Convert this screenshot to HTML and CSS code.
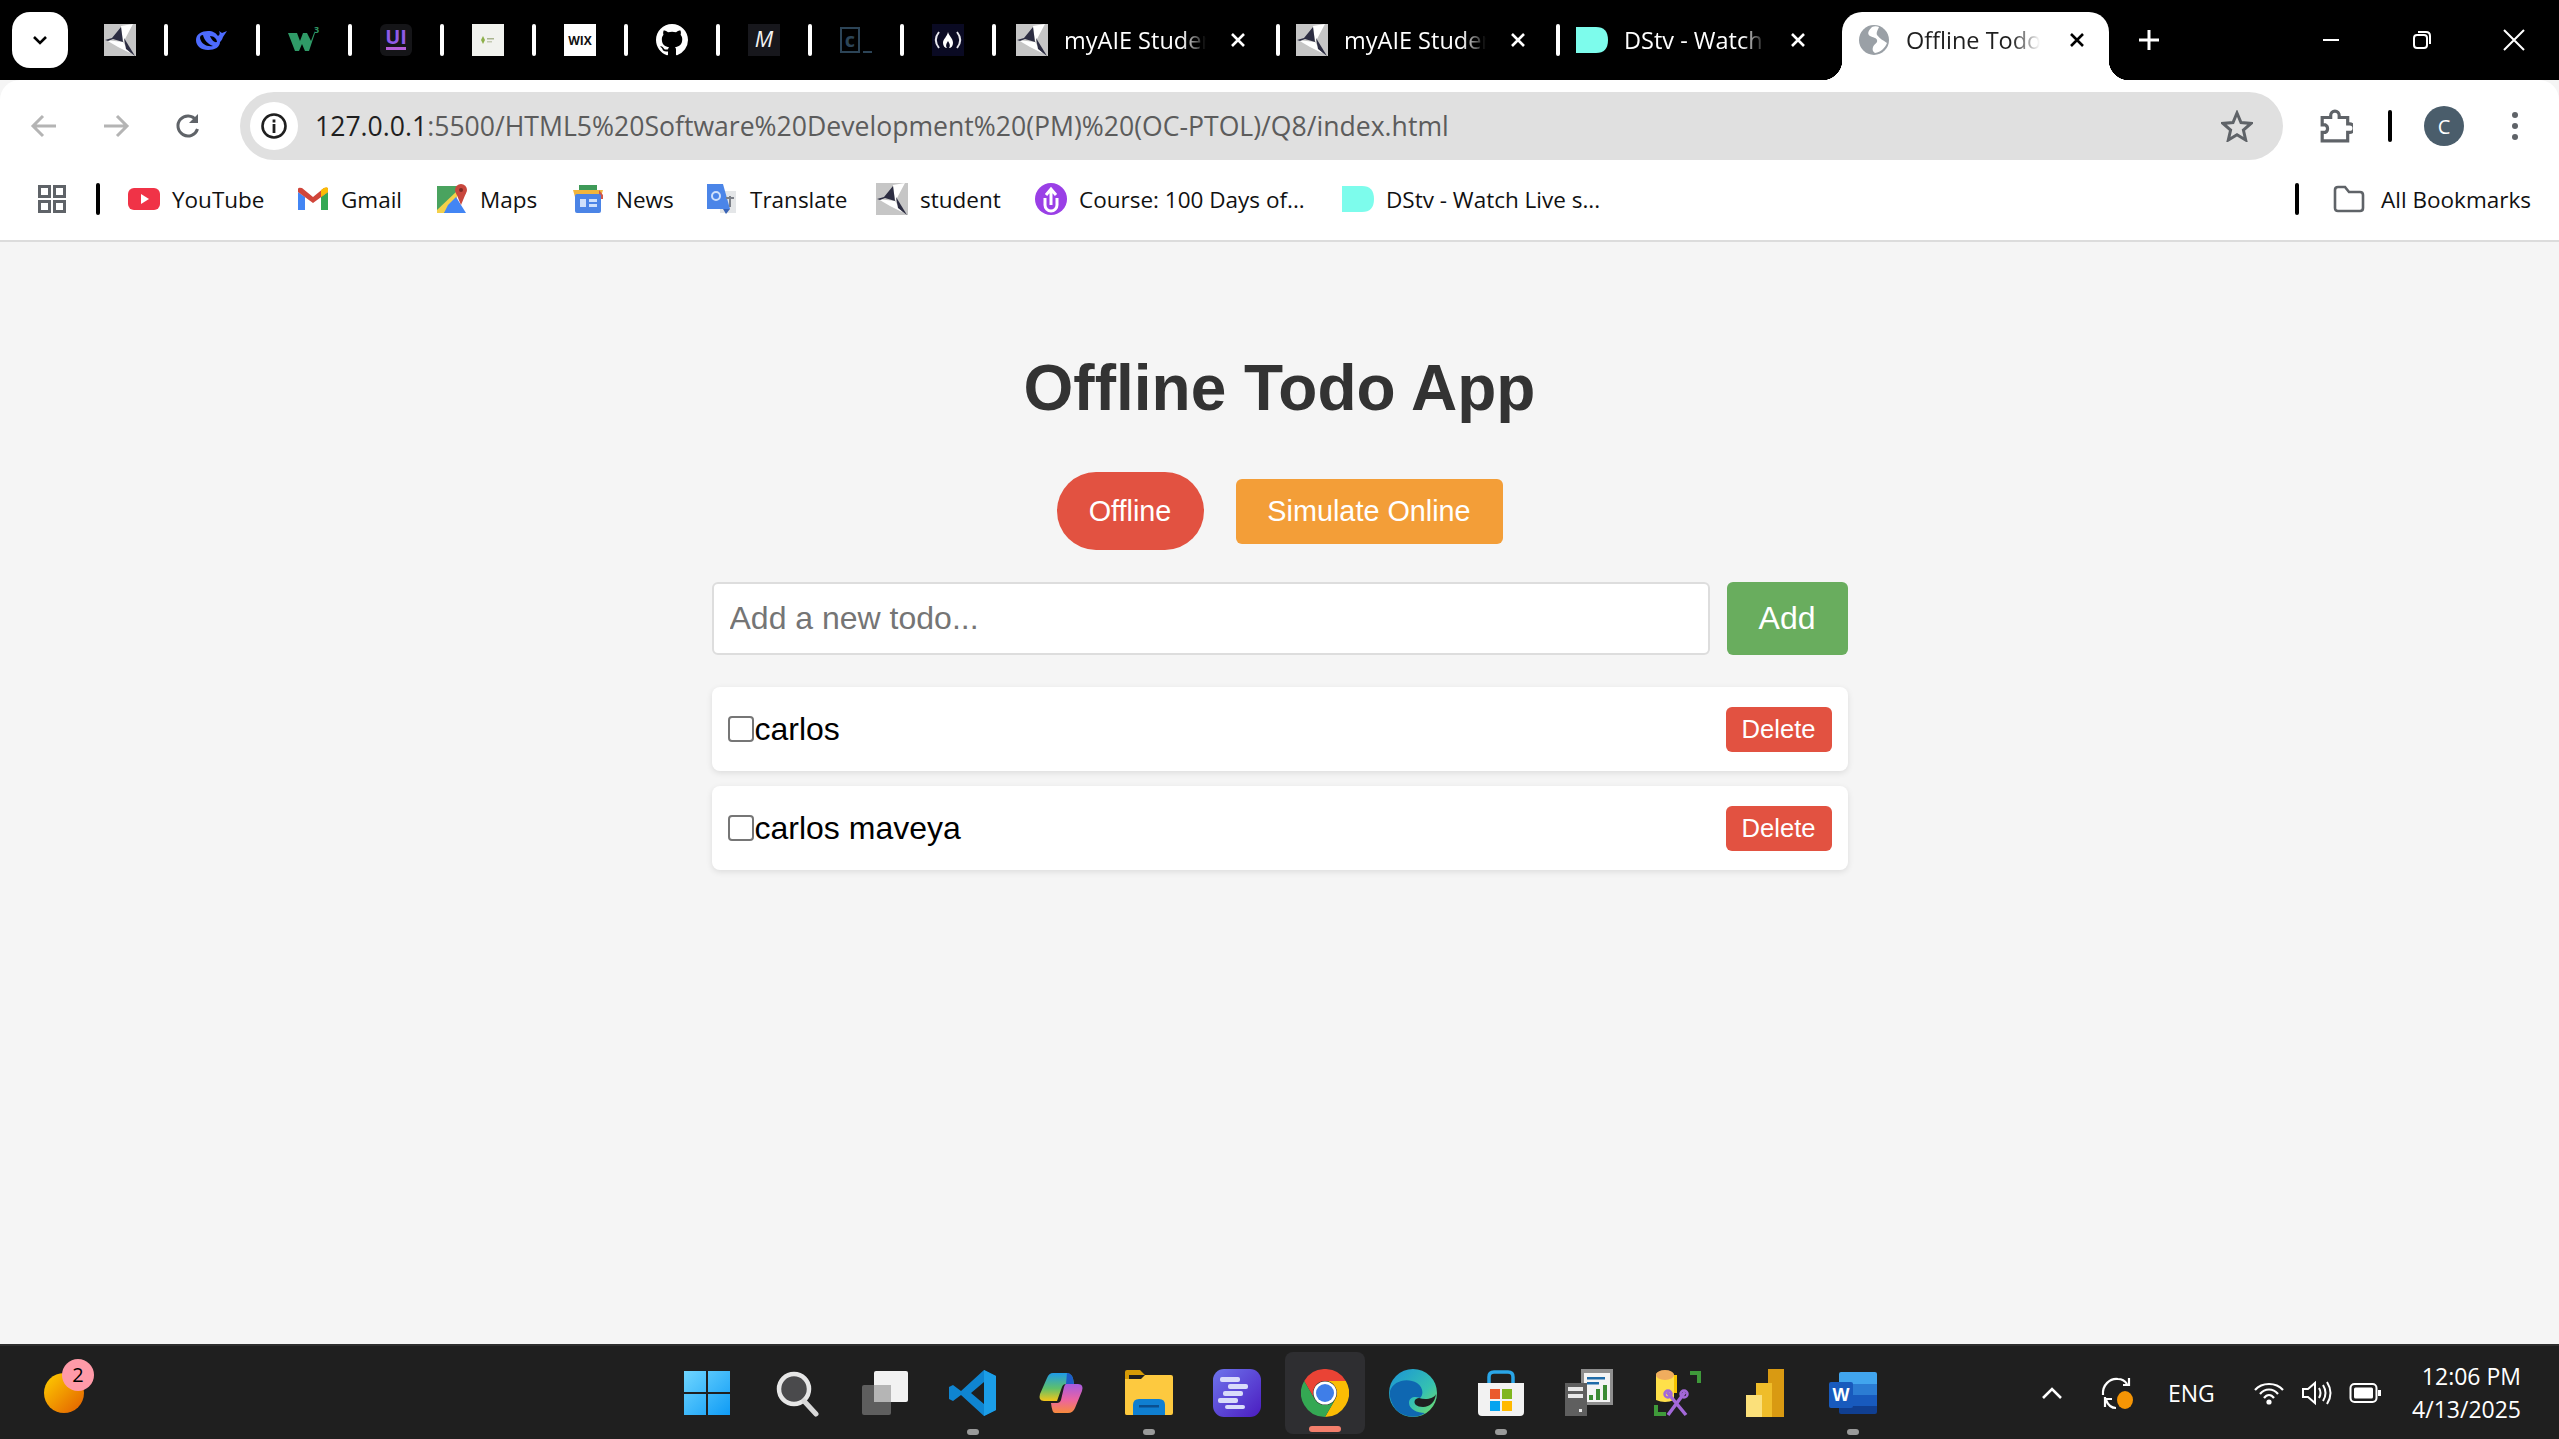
FILE: index.html
```html
<!DOCTYPE html>
<html>
<head>
  <title>Offline Todo App</title>
  <link rel="stylesheet" href="styles.css">
</head>
<body>
  <!-- shared icons -->
  <svg class="defs" width="0" height="0">
    <symbol id="aie" viewBox="0 0 32 32">
      <rect width="32" height="32" fill="#c6c6c6"/>
      <path d="M17 2 29 0 21 15 19 18Z" fill="#fff"/>
      <path d="M2 16 19 18 26 29 14 23Z" fill="#fff"/>
      <path d="M17 3 8 14 1 16 4 17 9 15 19 18Z" fill="#2c2d42"/>
      <path d="M20 14 31 32 22 25Z" fill="#2c2d42"/>
    </symbol>
    <symbol id="dstv" viewBox="0 0 32 32">
      <path d="M0 3H20Q32 3 32 16 32 29 20 29H0Z" fill="#7dfcec"/>
    </symbol>
    <symbol id="close" viewBox="0 0 16 16">
      <path d="M2 2 14 14M14 2 2 14" stroke="#000" stroke-width="2.6" fill="none"/>
    </symbol>
  </svg>

  <div class="tabstrip">
    <button class="tab-search">
      <svg width="16" height="10" viewBox="0 0 16 10"><path d="M2 2 8 8 14 2" stroke="#000" stroke-width="2.6" fill="none"/></svg>
    </button>

    <div class="pinned first">
      <svg class="fav"><use href="#aie"/></svg>
      <i class="tab-sep"></i>
      <svg class="fav" viewBox="0 0 32 32">
        <path d="M0 16C0 10 6 7 12 7 17 7 20 9 22 12 24 11 24 9 23 7L26 9 31 7 27 13C26 16 25 17 24 18 24 23 19 26 12 26 5 26 0 22 0 16Z" fill="#4d6bfe"/>
        <path d="M4 14C5 20 11 23 17 22 12 20 8 16 7 11 5 11 4 12 4 14ZM14 12C15 15 18 19 21 18 21 15 18 12 14 12Z" fill="#000"/>
      </svg>
      <i class="tab-sep"></i>
      <svg class="fav" viewBox="0 0 32 32">
        <path d="M0 9H9L12 17 15 9H19L23 17 26 9H27L21 27H17L14 20 11 27H7Z" fill="#2f9a67"/>
        <text x="26" y="9" class="fav-three">3</text>
      </svg>
      <i class="tab-sep"></i>
      <svg class="fav" viewBox="0 0 32 32">
        <rect width="32" height="32" rx="6" fill="#151518"/>
        <text x="16" y="20" class="fav-ui">UI</text>
        <rect x="6" y="23" width="20" height="3" fill="#b45ed8"/>
      </svg>
      <i class="tab-sep"></i>
      <svg class="fav" viewBox="0 0 32 32">
        <rect width="32" height="32" fill="#f1f2ee"/>
        <path d="M11 12 13 16 11 20 9 16Z" fill="#8db04a"/>
        <rect x="15" y="14" width="7" height="1.5" fill="#a9b48e"/>
        <rect x="15" y="17" width="5" height="1.5" fill="#c3c9b2"/>
      </svg>
      <i class="tab-sep"></i>
      <svg class="fav" viewBox="0 0 32 32">
        <rect width="32" height="32" fill="#fff"/>
        <text x="16" y="21" class="fav-wix">WIX</text>
      </svg>
      <i class="tab-sep"></i>
      <svg class="fav" viewBox="0 0 16 16">
        <path fill="#fff" d="M8 0C3.58 0 0 3.58 0 8c0 3.54 2.29 6.53 5.47 7.59.4.07.55-.17.55-.38 0-.19-.01-.82-.01-1.49-2.01.37-2.53-.49-2.69-.94-.09-.23-.48-.94-.82-1.13-.28-.15-.68-.52-.01-.53.63-.01 1.08.58 1.23.82.72 1.21 1.87.87 2.33.66.07-.52.28-.87.51-1.07-1.78-.2-3.64-.89-3.64-3.95 0-.87.31-1.59.82-2.15-.08-.2-.36-1.02.08-2.12 0 0 .67-.21 2.2.82.64-.18 1.32-.27 2-.27.68 0 1.36.09 2 .27 1.53-1.04 2.2-.82 2.2-.82.44 1.1.16 1.92.08 2.12.51.56.82 1.27.82 2.15 0 3.07-1.87 3.75-3.65 3.95.29.25.54.73.54 1.48 0 1.07-.01 1.93-.01 2.2 0 .21.15.46.55.38A8.013 8.013 0 0016 8c0-4.42-3.58-8-8-8z"/>
      </svg>
      <i class="tab-sep"></i>
      <svg class="fav" viewBox="0 0 32 32">
        <rect width="32" height="32" fill="#17171c"/>
        <text x="16" y="23" class="fav-m">M</text>
      </svg>
      <i class="tab-sep"></i>
      <svg class="fav" viewBox="0 0 32 32">
        <rect x="1" y="4" width="18" height="24" fill="none" stroke="#2c4457" stroke-width="2"/>
        <text x="10" y="23" class="fav-c">c</text>
        <rect x="23" y="27" width="9" height="2" fill="#2c4457"/>
      </svg>
      <i class="tab-sep"></i>
      <svg class="fav" viewBox="0 0 32 32">
        <rect width="32" height="32" fill="#0a0a23"/>
        <path d="M7 8C3 13 3 19 7 24M25 8C29 13 29 19 25 24" stroke="#e8e8ee" stroke-width="2" fill="none"/>
        <path d="M16 8C17 12 21 14 21 19 21 22 19 24 17 24 19 21 17 19 16 17 15 19 13 21 15 24 13 24 11 22 11 19 11 15 15 13 16 8Z" fill="#fff"/>
      </svg>
      <i class="tab-sep"></i>
    </div>

    <div class="tab">
      <svg class="fav"><use href="#aie"/></svg>
      <span class="tab-title">myAIE Studen</span>
      <svg class="tab-close"><use href="#close"/></svg>
      <i class="tab-sep"></i>
    </div>
    <div class="tab">
      <svg class="fav"><use href="#aie"/></svg>
      <span class="tab-title">myAIE Studen</span>
      <svg class="tab-close"><use href="#close"/></svg>
      <i class="tab-sep"></i>
    </div>
    <div class="tab">
      <svg class="fav"><use href="#dstv"/></svg>
      <span class="tab-title">DStv - Watch</span>
      <svg class="tab-close"><use href="#close"/></svg>
    </div>
    <div class="tab active">
      <svg class="fav" viewBox="0 0 32 32">
        <circle cx="16" cy="16" r="15" fill="#9aa0a6"/>
        <path d="M14 3C10 7 9 10 12 12 15 14 18 13 19 16 20 19 16 20 15 23 14 26 15 28 17 29 23 28 27 24 29 19 25 16 22 15 19 11 18 8 20 6 21 3 19 2 16 2 14 3Z" fill="#fff"/>
      </svg>
      <span class="tab-title">Offline Todo A</span>
      <svg class="tab-close"><use href="#close"/></svg>
    </div>

    <svg class="new-tab" viewBox="0 0 22 22"><path d="M11 1V21M1 11H21" stroke="#fff" stroke-width="3"/></svg>

    <div class="win-controls">
      <svg width="20" height="20" viewBox="0 0 20 20"><path d="M2 10H18" stroke="#fff" stroke-width="2"/></svg>
      <svg width="20" height="20" viewBox="0 0 20 20"><rect x="2" y="5" width="13" height="13" rx="3" stroke="#fff" stroke-width="2" fill="none"/><path d="M6 2H14Q18 2 18 6V14" stroke="#fff" stroke-width="2" fill="none"/></svg>
      <svg width="22" height="22" viewBox="0 0 22 22"><path d="M1 1 21 21M21 1 1 21" stroke="#fff" stroke-width="2"/></svg>
    </div>
  </div>

  <div class="toolbar">
    <svg class="nav-icon back" viewBox="0 0 28 28"><path d="M26 14H3M13 4 3 14 13 24" stroke="#b4b4b4" stroke-width="3" fill="none"/></svg>
    <svg class="nav-icon forward" viewBox="0 0 28 28"><path d="M2 14H25M15 4 25 14 15 24" stroke="#b4b4b4" stroke-width="3" fill="none"/></svg>
    <svg class="nav-icon reload" viewBox="0 0 28 28"><path d="M23.5 17A10 10 0 1 1 22 8" stroke="#5f6368" stroke-width="3" fill="none"/><path d="M24 2V11H15Z" fill="#5f6368"/></svg>

    <div class="omnibox">
      <span class="site-info">
        <svg width="28" height="28" viewBox="0 0 28 28"><circle cx="14" cy="14" r="11.5" stroke="#1f1f1f" stroke-width="2.6" fill="none"/><rect x="12.6" y="12" width="2.8" height="9" fill="#1f1f1f"/><rect x="12.6" y="7.5" width="2.8" height="3" fill="#1f1f1f"/></svg>
      </span>
      <span class="url"><b>127.0.0.1</b>:5500/HTML5%20Software%20Development%20(PM)%20(OC-PTOL)/Q8/index.html</span>
      <svg class="star" viewBox="0 0 32 32"><path d="M16 3 20 12.5 30 13.4 22.4 20 24.7 30 16 24.7 7.3 30 9.6 20 2 13.4 12 12.5Z" stroke="#5f6368" stroke-width="3" fill="none"/></svg>
    </div>

    <svg class="ext-icon" viewBox="0 0 32 32"><path d="M3 8H11V6A4 4 0 0 1 19 6V8H27V14H29A4 4 0 0 1 29 22H27V30H3V22H6A4 4 0 0 0 6 15H3Z" stroke="#5f6368" stroke-width="3" fill="none"/></svg>
    <i class="bar-sep tool-sep"></i>
    <span class="avatar">C</span>
    <span class="more-dots"><i></i><i></i><i></i></span>
  </div>

  <div class="bookmarks">
    <svg class="apps" viewBox="0 0 28 28"><path d="M1.5 1.5H11.5V11.5H1.5ZM16.5 1.5H26.5V11.5H16.5ZM1.5 16.5H11.5V26.5H1.5ZM16.5 16.5H26.5V26.5H16.5Z" stroke="#5f6368" stroke-width="3" fill="none"/></svg>
    <i class="bar-sep book-sep"></i>

    <a class="bookmark">
      <svg class="bm-icon" viewBox="0 0 32 32"><rect y="5" width="32" height="22" rx="6" fill="#f03347"/><path d="M13 11 21 16 13 21Z" fill="#fff"/></svg>
      YouTube
    </a>
    <a class="bookmark">
      <svg class="bm-icon" viewBox="0 0 32 32"><path d="M1 9V27H8V14Z" fill="#4285f4"/><path d="M24 14V27H31V9Z" fill="#34a853"/><path d="M1 9V6Q1 4 5 5L16 14 27 5Q31 4 31 6V9L16 20Z" fill="#d0453a"/><path d="M24 14 31 9V6Q31 3 27 5L24 7Z" fill="#fbbc04"/></svg>
      Gmail
    </a>
    <a class="bookmark">
      <svg class="bm-icon tall" viewBox="0 0 32 32"><path d="M1 3H21V30H1Z" fill="#4aa35f"/><path d="M1 27 21 8 21 16 8 30H1Z" fill="#f4d04a"/><path d="M12 22 20 14 30 30H8Z" fill="#4285f4"/><circle cx="25" cy="7" r="6" fill="#c8473d"/><path d="M20 10 25 22 30 10Z" fill="#c8473d"/><circle cx="25" cy="7" r="2" fill="#7d2a25"/></svg>
      Maps
    </a>
    <a class="bookmark">
      <svg class="bm-icon" viewBox="0 0 32 32"><rect x="7" y="2" width="18" height="8" fill="#3e9a58"/><path d="M1 7H31L29 14H3Z" fill="#f2b53c"/><path d="M27 7 31 12V16H27Z" fill="#d0574a"/><rect x="3" y="11" width="26" height="19" rx="2" fill="#4b84e6"/><rect x="8" y="16" width="6" height="8" fill="#cfe0fb"/><rect x="17" y="16" width="8" height="3" fill="#cfe0fb"/><rect x="17" y="21" width="8" height="3" fill="#cfe0fb"/></svg>
      News
    </a>
    <a class="bookmark">
      <svg class="bm-icon" viewBox="0 0 32 32"><path d="M14 8H30V30H14Z" fill="#e4e6e8"/><path d="M1 1H17L24 26H1Z" fill="#4b85e8"/><path d="M17 26H24L20 31Z" fill="#3a64b5"/><circle cx="10" cy="13" r="4" fill="none" stroke="#cfe0fb" stroke-width="2"/><path d="M20 15H28M24 13V24" stroke="#7c8088" stroke-width="2"/></svg>
      Translate
    </a>
    <a class="bookmark">
      <svg class="bm-icon tall"><use href="#aie"/></svg>
      student
    </a>
    <a class="bookmark">
      <svg class="bm-icon tall" viewBox="0 0 32 32"><circle cx="16" cy="16" r="16" fill="#9a3fe6"/><path d="M10 15V22A6 6 0 0 0 22 22V15" fill="none" stroke="#fff" stroke-width="3"/><path d="M16 22V8M11 12 16 6 21 12" fill="none" stroke="#fff" stroke-width="3"/></svg>
      Course: 100 Days of...
    </a>
    <a class="bookmark">
      <svg class="bm-icon"><use href="#dstv"/></svg>
      DStv - Watch Live s...
    </a>

    <i class="bar-sep all-sep"></i>
    <a class="all-marks">
      <svg class="bm-icon" viewBox="0 0 32 32"><path d="M2 7Q2 4 5 4H12L16 9H27Q30 9 30 12V25Q30 28 27 28H5Q2 28 2 25Z" stroke="#5f6368" stroke-width="2.6" fill="none"/></svg>
      All Bookmarks
    </a>
  </div>

  <main class="app">
    <h1>Offline Todo App</h1>

    <div class="status-row">
      <span class="status-pill">Offline</span>
      <button class="simulate-btn">Simulate Online</button>
    </div>

    <div class="todo-form">
      <input class="todo-input" type="text" placeholder="Add a new todo...">
      <button class="add-btn">Add</button>
    </div>

    <ul class="todo-list">
      <li class="todo-item">
        <input type="checkbox">
        <span class="todo-text">carlos</span>
        <button class="delete-btn">Delete</button>
      </li>
      <li class="todo-item">
        <input type="checkbox">
        <span class="todo-text">carlos maveya</span>
        <button class="delete-btn">Delete</button>
      </li>
    </ul>
  </main>

  <footer class="taskbar">
    <div class="widget"><span class="widget-badge">2</span></div>

    <div class="task-icons">
      <span class="slot win-start">
        <svg viewBox="0 0 48 48"><defs><linearGradient id="winblue" x1="0" y1="0" x2="1" y2="1"><stop offset="0" stop-color="#6fd6ff"/><stop offset="1" stop-color="#0f9bf5"/></linearGradient></defs><path d="M1 2H23V23H1ZM25 2H47V23H25ZM1 25H23V46H1ZM25 25H47V46H25Z" fill="url(#winblue)"/></svg>
      </span>
      <span class="slot">
        <svg viewBox="0 0 48 48"><circle cx="21" cy="20" r="15" fill="#4a4a4c" stroke="#e6e6e6" stroke-width="4.5"/><path d="M31 32 43 45" stroke="#d8d8d8" stroke-width="5" stroke-linecap="round"/></svg>
      </span>
      <span class="slot">
        <svg viewBox="0 0 48 48"><rect x="1" y="16" width="29" height="30" rx="2" fill="#5e5e5e"/><rect x="13" y="2" width="34" height="31" rx="2" fill="#f2f2f2"/><rect x="13" y="16" width="17" height="17" fill="#b5b5b5"/></svg>
      </span>
      <span class="slot dot">
        <svg viewBox="0 0 48 48"><path d="M35 1 47 7V41L35 47 12 26 4 32 0 30V18L4 16 12 22ZM35 13 22 24 35 35Z" fill="#0f85d1"/><path d="M35 1 47 7V41L35 47Z" fill="#1b9ee8"/></svg>
      </span>
      <span class="slot">
        <svg viewBox="0 0 48 48"><defs><linearGradient id="copa" x1="0" y1="0" x2="0" y2="1"><stop offset="0" stop-color="#1e9be8"/><stop offset=".55" stop-color="#5fc06a"/><stop offset="1" stop-color="#f5c518"/></linearGradient><linearGradient id="copb" x1="0" y1="0" x2="0" y2="1"><stop offset="0" stop-color="#a55be0"/><stop offset=".55" stop-color="#ec64a0"/><stop offset="1" stop-color="#f78a3c"/></linearGradient></defs><path d="M16 4H30Q36 4 37 15H29Q26 15 25 18L20 32H7Q1 32 3 25L10 9Q12 4 16 4Z" fill="url(#copa)"/><path d="M30 4Q36 4 37 15H29Z" fill="#1c5cc8"/><path d="M29 15H41Q47 15 45 22L38 39Q36 44 31 44H18Q15 44 14 34H20Q23 34 24 31L27 18Q28 15 29 15Z" fill="url(#copb)"/></svg>
      </span>
      <span class="slot dot">
        <svg viewBox="0 0 48 48"><path d="M0 3Q0 1 2 1H15L20 6H4V46H2Q0 46 0 44Z" fill="#d59a06"/><path d="M0 10 16 10 20 6H46Q48 6 48 8V44Q48 46 46 46H2Q0 46 0 44Z" fill="#fdc93f"/><path d="M8 46V36Q8 30 14 30H34Q40 30 40 36V46Z" fill="#0f7fd1"/><rect x="14" y="36" width="20" height="2.5" fill="#0a4f8f"/></svg>
      </span>
      <span class="slot">
        <svg viewBox="0 0 48 48"><defs><linearGradient id="purp" x1="0" y1="0" x2="1" y2="1"><stop offset="0" stop-color="#6d74ec"/><stop offset="1" stop-color="#4b1cc0"/></linearGradient></defs><rect width="48" height="48" rx="11" y="0" fill="url(#purp)"/><g fill="#d8dcfa"><rect x="7" y="8" width="20" height="5" rx="2"/><rect x="15" y="15" width="20" height="5" rx="2"/><rect x="10" y="22" width="20" height="5" rx="2"/><rect x="5" y="29" width="20" height="5" rx="2"/><rect x="12" y="36" width="20" height="4" rx="2"/></g></svg>
      </span>
      <span class="slot current">
        <svg viewBox="0 0 48 48"><path d="M3.2 12A24 24 0 0 1 44.8 12H24A12 12 0 0 0 13.6 30Z" fill="#ea4335"/><path d="M44.8 12A24 24 0 0 1 24 48L34.4 30A12 12 0 0 0 24 12Z" fill="#fbbc04"/><path d="M3.2 12 13.6 30A12 12 0 0 0 34.4 30L24 48A24 24 0 0 1 3.2 12Z" fill="#34a853"/><circle cx="24" cy="24" r="11.5" fill="#fff"/><circle cx="24" cy="24" r="9" fill="#3f7ee8"/></svg>
      </span>
      <span class="slot">
        <svg viewBox="0 0 48 48"><defs><linearGradient id="edgea" x1="0" y1="0" x2="1" y2="1"><stop offset="0" stop-color="#1a93d8"/><stop offset=".6" stop-color="#35c1b1"/><stop offset="1" stop-color="#7be05f"/></linearGradient></defs><circle cx="24" cy="24" r="24" fill="url(#edgea)"/><path d="M1 22C4 12 18 8 28 14 34 18 35 25 31 29 26 27 20 28 20 34 20 40 28 44 36 44 28 50 12 49 5 38 2 33 0 27 1 22Z" fill="#0f67b1"/><path d="M30 29C36 31 45 30 47 25 46 33 41 38 34 38 28 38 24 35 26 31 27 30 28 29 30 29Z" fill="#1f1f1f"/></svg>
      </span>
      <span class="slot dot">
        <svg viewBox="0 0 48 48"><path d="M12 14V8Q12 3 17 3H31Q36 3 36 8V14" stroke="#2aa6e8" stroke-width="3.5" fill="none"/><path d="M1 14H47V43Q47 47 43 47H5Q1 47 1 43Z" fill="#f2f2f2"/><rect x="13" y="20" width="10" height="10" fill="#ea5a2d"/><rect x="25" y="20" width="10" height="10" fill="#7fb61e"/><rect x="13" y="32" width="10" height="10" fill="#06a4ef"/><rect x="25" y="32" width="10" height="10" fill="#ffb900"/></svg>
      </span>
      <span class="slot">
        <svg viewBox="0 0 48 48"><rect x="16" y="0" width="32" height="36" fill="#8e8e8e"/><rect x="19" y="4" width="26" height="29" fill="#f4f4f4"/><rect x="22" y="8" width="18" height="2.5" fill="#1f6ba8"/><rect x="22" y="13" width="12" height="2.5" fill="#1f6ba8"/><path d="M24 31V26H28V31ZM31 31V20H35V31ZM38 31V16H42V31Z" fill="#3b8a34"/><rect x="0" y="14" width="22" height="33" fill="#5f5f5f"/><rect x="3" y="18" width="15" height="4" fill="#e8e8e8"/><rect x="3" y="25" width="15" height="4" fill="#e8e8e8"/><rect x="14" y="40" width="3" height="3" fill="#e8e8e8"/></svg>
      </span>
      <span class="slot">
        <svg viewBox="0 0 48 48"><path d="M3 6Q3 2 12 2 20 2 21 6V31Q12 35 3 31Z" fill="#ffe04a"/><ellipse cx="12" cy="6" rx="9" ry="5" fill="#f0ad5e"/><path d="M21 6H24V24H21Z" fill="#f7c400"/><path d="M37 2H48V14H44V6H37ZM1 36H5V43H13V47H1Z" fill="#3f9a3a"/><path d="M14 23 33 46M32 23 15 46" stroke="#a368d8" stroke-width="3.5"/><circle cx="15" cy="25" r="3.5" fill="none" stroke="#a368d8" stroke-width="2.5"/><circle cx="31" cy="25" r="3.5" fill="none" stroke="#a368d8" stroke-width="2.5"/></svg>
      </span>
      <span class="slot">
        <svg viewBox="0 0 48 48"><rect x="27" y="0" width="16" height="48" fill="#d99a12"/><rect x="15" y="14" width="16" height="34" fill="#efbd2a"/><rect x="5" y="26" width="16" height="22" fill="#fbe07a"/></svg>
      </span>
      <span class="slot dot">
        <svg viewBox="0 0 48 48"><path d="M10 5Q10 3 12 3H46Q48 3 48 5V15H10Z" fill="#41a5ee"/><rect x="10" y="15" width="38" height="11" fill="#2b7cd3"/><rect x="10" y="26" width="38" height="11" fill="#185abd"/><path d="M10 37H48V43Q48 45 46 45H12Q10 45 10 43Z" fill="#103f91"/><rect x="0" y="13" width="24" height="26" rx="2" fill="#185abd"/><text x="12" y="32" class="word-w">W</text></svg>
      </span>
    </div>

    <div class="tray">
      <svg class="tray-chevron" viewBox="0 0 22 14"><path d="M2 12 11 3 20 12" stroke="#fff" stroke-width="2.6" fill="none"/></svg>
      <svg class="tray-sync" viewBox="0 0 32 34"><path d="M2 19C1 9 9 2 17 3 21 3 24 5 26 8M22 9H28V2" stroke="#fff" stroke-width="2.2" fill="none"/><path d="M4 21V31M4 23H11M5 24C7 29 11 32 15 32" stroke="#fff" stroke-width="2.2" fill="none"/><ellipse cx="24" cy="24" rx="8" ry="9" fill="#f59505"/></svg>
      <span class="tray-lang">ENG</span>
      <svg class="tray-icon" viewBox="0 0 32 26"><path d="M2 10C9 2 23 2 30 10M7 14C12 8 20 8 25 14M11 18C14 14 18 14 21 18" stroke="#fff" stroke-width="2.2" fill="none"/><circle cx="16" cy="22" r="2.6" fill="#fff"/></svg>
      <svg class="tray-icon" viewBox="0 0 32 26"><path d="M2 9H7L14 3V23L7 17H2Z" stroke="#fff" stroke-width="2" fill="none"/><path d="M18 8Q21 13 18 18M22 5Q27 13 22 21M26 2Q33 13 26 24" stroke="#fff" stroke-width="2" fill="none"/></svg>
      <svg class="tray-icon" viewBox="0 0 32 26"><rect x="1.5" y="4" width="26" height="18" rx="4" stroke="#fff" stroke-width="2" fill="none"/><rect x="5" y="7.5" width="19" height="11" rx="1.5" fill="#fff"/><rect x="29" y="10" width="3" height="6" fill="#fff"/></svg>
      <div class="clock">
        <span>12:06 PM</span>
        <span>4/13/2025</span>
      </div>
    </div>
  </footer>
</body>
</html>
```

FILE: styles.css
```css
* {
  box-sizing: border-box;
}

html, body {
  height: 100%;
}

body {
  display: flex;
  flex-direction: column;
  margin: 0;
  overflow: hidden;
  font-family: "Liberation Sans", Arial, sans-serif;
  background-color: #f5f5f5;
}

.defs {
  position: absolute;
}

/* tab strip */
.tabstrip {
  display: flex;
  align-items: center;
  flex: none;
  height: 80px;
  padding-left: 12px;
  background-color: #000;
  color: #fff;
  font-family: "Open Sans", sans-serif;
  font-size: 23.5px;
}

.tab-search {
  display: flex;
  align-items: center;
  justify-content: center;
  width: 56px;
  height: 56px;
  padding: 0;
  border: none;
  border-radius: 18px;
  background-color: #fff;
}

.pinned {
  display: flex;
  align-items: center;
  gap: 28px;
  margin-left: 36px;
  margin-right: 20px;
}

.fav {
  flex: none;
  width: 32px;
  height: 32px;
}

.fav-three {
  font-size: 9px;
  fill: #2f9a67;
  font-weight: bold;
}

.fav-ui {
  font-size: 20px;
  font-weight: bold;
  text-anchor: middle;
  fill: #8f5be8;
}

.fav-wix {
  font-size: 12px;
  font-weight: bold;
  text-anchor: middle;
  fill: #111;
}

.fav-m {
  font-size: 22px;
  font-style: italic;
  text-anchor: middle;
  fill: #f2f2f2;
}

.fav-c {
  font-size: 20px;
  font-weight: bold;
  text-anchor: middle;
  fill: #2c4457;
}

.tab-sep {
  flex: none;
  width: 4px;
  height: 32px;
  border-radius: 2px;
  background-color: #fff;
}

.tab {
  display: flex;
  align-items: center;
  flex: none;
  width: 280px;
}

.tab-title {
  flex: none;
  width: 166px;
  margin-left: 16px;
  white-space: nowrap;
  -webkit-mask-image: linear-gradient(to right, #000 118px, transparent 142px);
  mask-image: linear-gradient(to right, #000 118px, transparent 142px);
}

.tab-close {
  flex: none;
  width: 16px;
  height: 16px;
  margin-left: 0;
  margin-right: 30px;
  filter: invert(1);
}

.tab.active {
  position: relative;
  align-self: flex-end;
  width: 267px;
  height: 68px;
  margin-left: -14px;
  padding-left: 16px;
  padding-bottom: 12px;
  border-radius: 20px 20px 0 0;
  background-color: #fff;
  color: #1f1f1f;
}

.tab.active::before,
.tab.active::after {
  content: "";
  position: absolute;
  bottom: 0;
  width: 20px;
  height: 20px;
}

.tab.active::before {
  left: -20px;
  background: radial-gradient(circle at 0 0, #000 20px, #fff 20.5px);
}

.tab.active::after {
  right: -20px;
  background: radial-gradient(circle at 100% 0, #000 20px, #fff 20.5px);
}

.tab.active .tab-title {
  -webkit-mask-image: linear-gradient(to right, #000 106px, transparent 134px);
  mask-image: linear-gradient(to right, #000 106px, transparent 134px);
}

.tab.active .tab-close {
  filter: none;
  margin-left: -3px;
  margin-right: 0;
}

.new-tab {
  flex: none;
  width: 22px;
  height: 22px;
  margin-left: 29px;
}

.win-controls {
  display: flex;
  align-items: center;
  gap: 71px;
  margin-left: auto;
  margin-right: 34px;
}

/* toolbar */
.toolbar {
  display: flex;
  align-items: center;
  flex: none;
  height: 80px;
  padding-top: 12px;
  border-radius: 20px 20px 0 0;
  background-color: #fff;
  margin-bottom: 0;
}

.nav-icon {
  flex: none;
  width: 28px;
  height: 28px;
}

.back {
  margin-left: 30px;
}

.forward {
  margin-left: 44px;
}

.reload {
  margin-left: 44px;
}

.omnibox {
  display: flex;
  align-items: center;
  flex: none;
  width: 2043px;
  height: 68px;
  margin-left: 38px;
  padding-left: 10px;
  padding-right: 30px;
  border-radius: 34px;
  background-color: #e0e0e0;
  font-family: "Open Sans", sans-serif;
  font-size: 26.6px;
  color: #5c5c5c;
}

.site-info {
  display: flex;
  align-items: center;
  justify-content: center;
  flex: none;
  width: 48px;
  height: 48px;
  border-radius: 50%;
  background-color: #fff;
}

.url {
  margin-left: 17px;
  white-space: nowrap;
}

.url b {
  font-weight: normal;
  color: #1f1f1f;
}

.star {
  flex: none;
  width: 32px;
  height: 32px;
  margin-left: auto;
}

.ext-icon {
  flex: none;
  width: 34px;
  height: 34px;
  margin-left: 36px;
}

.bar-sep {
  flex: none;
  width: 4px;
  height: 32px;
  border-radius: 2px;
  background-color: #000;
}

.tool-sep {
  margin-left: 35px;
}

.avatar {
  display: flex;
  align-items: center;
  justify-content: center;
  flex: none;
  width: 40px;
  height: 40px;
  margin-left: 32px;
  border-radius: 50%;
  background-color: #4a5d6b;
  color: #fff;
  font-family: "Open Sans", sans-serif;
  font-size: 20px;
}

.more-dots {
  display: flex;
  flex-direction: column;
  gap: 5px;
  margin-left: 48px;
}

.more-dots i {
  width: 6px;
  height: 6px;
  border-radius: 50%;
  background-color: #5f6368;
}

/* bookmarks bar */
.bookmarks {
  display: flex;
  align-items: center;
  flex: none;
  height: 82px;
  padding-left: 38px;
  padding-bottom: 2px;
  border-bottom: 2px solid #dcdcdc;
  background-color: #fff;
  font-family: "Open Sans", sans-serif;
  font-size: 22.5px;
  color: #111;
}

.apps {
  flex: none;
  width: 28px;
  height: 28px;
}

.book-sep {
  margin-left: 30px;
  margin-right: 28px;
}

.bookmark {
  display: flex;
  align-items: center;
  flex: none;
  gap: 12px;
  white-space: nowrap;
}

.bookmark:nth-of-type(1) { width: 169px; }
.bookmark:nth-of-type(2) { width: 139px; }
.bookmark:nth-of-type(3) { width: 136px; }
.bookmark:nth-of-type(4) { width: 134px; }
.bookmark:nth-of-type(5) { width: 170px; }
.bookmark:nth-of-type(6) { width: 159px; }
.bookmark:nth-of-type(7) { width: 307px; }

.bm-icon {
  flex: none;
  width: 32px;
  height: 32px;
}

.all-sep {
  margin-left: auto;
  margin-right: 34px;
}

.all-marks {
  display: flex;
  align-items: center;
  gap: 16px;
  margin-right: 28px;
  white-space: nowrap;
}

/* app */
.app {
  display: flex;
  flex-direction: column;
  align-items: center;
  flex: 1;
  padding-top: 109px;
}

h1 {
  margin: 0 0 47px;
  font-size: 64px;
  line-height: 74px;
  color: #333;
}

.status-row {
  display: flex;
  align-items: center;
  gap: 32px;
  margin-bottom: 32px;
}

.status-pill {
  display: flex;
  align-items: center;
  justify-content: center;
  width: 147px;
  height: 78px;
  border-radius: 40px;
  background-color: #e25241;
  color: #fff;
  font-size: 28.8px;
}

button {
  border: none;
  color: #fff;
  font-family: inherit;
}

.simulate-btn {
  width: 267px;
  height: 65px;
  padding: 0;
  border-radius: 6px;
  background-color: #f39e38;
  font-size: 28.8px;
}

.todo-form {
  display: flex;
  gap: 17px;
  width: 1136px;
  margin-bottom: 32px;
}

.todo-input {
  flex: 1;
  height: 73px;
  padding: 0 16px;
  border: 2px solid #ddd;
  border-radius: 6px;
  background-color: #fff;
  font-family: inherit;
  font-size: 32px;
}

.todo-input::placeholder {
  color: #757575;
}

.add-btn {
  width: 121px;
  height: 73px;
  padding: 0;
  border-radius: 6px;
  background-color: #69ad5e;
  font-size: 32px;
}

.todo-list {
  display: flex;
  flex-direction: column;
  gap: 15px;
  width: 1136px;
  margin: 0;
  padding: 0;
  list-style: none;
}

.todo-item {
  display: flex;
  align-items: center;
  height: 84px;
  padding: 0 16px;
  border-radius: 8px;
  background-color: #fff;
  box-shadow: 0 2px 6px rgba(0, 0, 0, 0.1);
}

.todo-item input {
  flex: none;
  width: 26px;
  height: 26px;
  margin: 0 1px 0 0;
  appearance: none;
  border: 2px solid #767676;
  border-radius: 4px;
  background-color: #fff;
}

.todo-text {
  font-size: 32px;
  color: #000;
}

.delete-btn {
  width: 106px;
  height: 45px;
  margin-left: auto;
  padding: 0;
  border-radius: 6px;
  background-color: #e25241;
  font-size: 25.6px;
}

/* windows taskbar */
.taskbar {
  display: flex;
  align-items: center;
  flex: none;
  height: 95px;
  border-top: 2px solid #2e2e2e;
  background-color: #1f1f1f;
  color: #fff;
  font-family: "Open Sans", sans-serif;
}

.widget {
  position: relative;
  flex: none;
  width: 40px;
  height: 40px;
  margin-left: 44px;
  border-radius: 50%;
  background: linear-gradient(135deg, #ffd000, #e25c00);
}

.widget-badge {
  position: absolute;
  top: -14px;
  left: 18px;
  display: flex;
  align-items: center;
  justify-content: center;
  width: 32px;
  height: 32px;
  border-radius: 50%;
  background-color: #ff9aa8;
  color: #000;
  font-size: 20px;
}

.task-icons {
  display: flex;
  flex: none;
  height: 100%;
  margin-left: 581px;
}

.slot {
  position: relative;
  display: flex;
  align-items: center;
  justify-content: center;
  flex: none;
  width: 88px;
}

.slot svg {
  width: 48px;
  height: 48px;
}

.win-start svg {
  margin-right: 4px;
}

.slot.dot::after {
  content: "";
  position: absolute;
  bottom: 4px;
  left: 38px;
  width: 12px;
  height: 6px;
  border-radius: 3px;
  background-color: #9a9a9a;
}

.slot.current::before {
  content: "";
  position: absolute;
  top: 6px;
  bottom: 5px;
  left: 4px;
  right: 4px;
  border-radius: 8px;
  background-color: #2e2e31;
}

.slot.current svg {
  position: relative;
}

.slot.current::after {
  content: "";
  position: absolute;
  bottom: 7px;
  left: 28px;
  width: 32px;
  height: 6px;
  border-radius: 3px;
  background-color: #f47f6c;
}

.word-w {
  font-family: "Liberation Sans", sans-serif;
  font-size: 18px;
  font-weight: bold;
  text-anchor: middle;
  fill: #fff;
}

.tray {
  display: flex;
  align-items: center;
  flex: 1;
  font-size: 23px;
}

.tray-chevron {
  flex: none;
  width: 22px;
  height: 14px;
  margin-left: 144px;
}

.tray-sync {
  flex: none;
  width: 32px;
  height: 34px;
  margin-left: 38px;
}

.tray-lang {
  margin-left: 35px;
  font-size: 23px;
}

.tray-icon {
  flex: none;
  width: 32px;
  height: 26px;
  margin-left: 16px;
}

.tray-lang + .tray-icon {
  margin-left: 38px;
}

.clock {
  display: flex;
  flex-direction: column;
  align-items: flex-end;
  gap: 4px;
  margin-left: auto;
  margin-right: 38px;
  line-height: 29px;
}
```
